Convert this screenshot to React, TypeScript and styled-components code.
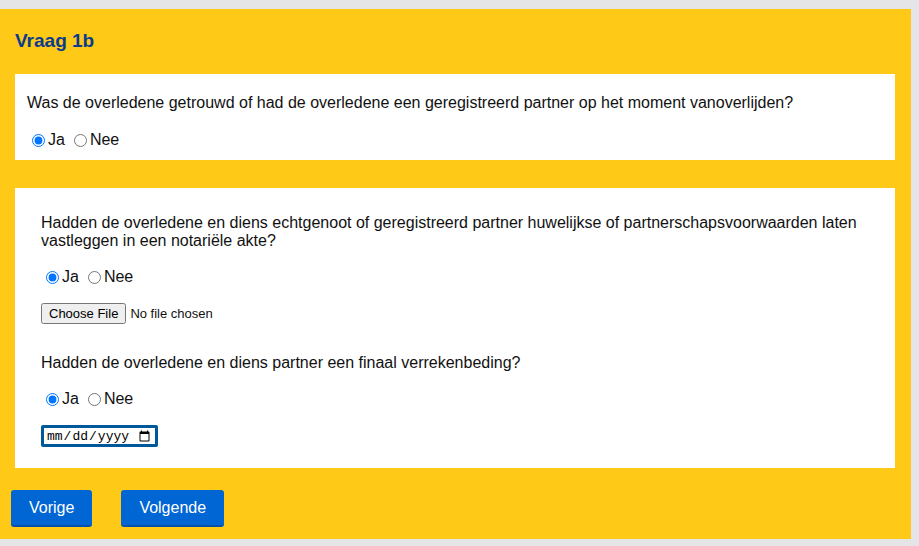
import { FunctionComponent } from "react";
import styled, { createGlobalStyle } from "styled-components";

const GlobalStyle = createGlobalStyle`
  html, body {
    margin: 0;
    padding: 0;
    background: #e5e5e7;
  }
  body {
    font-family: "Liberation Sans", Arial, sans-serif;
    color: #111;
  }
`

const Page = styled.div`
  padding-top: 9px;
  width: 919px;
  height: 546px;
  box-sizing: border-box;
`
const Panel = styled.div`
  width: 911px;
  box-sizing: border-box;
  background: #fec917;
  padding: 20px 16px 12px 11px;
`
const Title = styled.h2`
  margin: 0 0 22px 4px;
  font-size: 19px;
  line-height: 23px;
  font-weight: bold;
  color: #0b3b8c;
`
const Card = styled.div<{ $pad: string }>`
  margin-left: 4px;
  background: #fff;
  padding: ${props => props.$pad};
  display: flex;
  flex-direction: column;
`
const Question = styled.p<{ $gap: number }>`
  margin: 0 0 ${props => props.$gap}px 0;
  font-size: 16px;
  line-height: 18px;
`
const Row = styled.div<{ $gap: number; $h: number }>`
  display: flex;
  align-items: center;
  height: ${props => props.$h}px;
  margin-bottom: ${props => props.$gap}px;
  font-size: 16px;
`
const RadioLabel = styled.label`
  display: flex;
  align-items: center;
  margin-right: 4px;
  input {
    width: 13px;
    height: 13px;
    margin: 1px 3px 0 5px;
  }
`
const FileInput = styled.input`
  font: 13px "Liberation Sans", Arial, sans-serif;
`
const DateInput = styled.input`
  width: 117px;
  height: 22px;
  box-sizing: border-box;
  border: 3px solid #00589c;
  border-radius: 2px;
  padding: 0 2px;
  font: 13px "Liberation Mono", monospace;
  outline: none;
`
const Second = styled.div`
  margin-top: 28px;
`
const ButtonRow = styled.div`
  display: flex;
  gap: 29px;
  margin-top: 22px;
`
const NavButton = styled.button`
  height: 37px;
  padding: 0 18px;
  border: none;
  border-bottom: 2px solid #0253a8;
  border-radius: 3px;
  background: #0066d4;
  color: #fff;
  font: 16px "Liberation Sans", Arial, sans-serif;
  cursor: pointer;
`

const YesNo: FunctionComponent<{ name: string; gap: number }> = ({ name, gap }) => (
  <Row $gap={gap} $h={18}>
    <RadioLabel>
      <input type="radio" name={name} defaultChecked />Ja
    </RadioLabel>
    <RadioLabel>
      <input type="radio" name={name} />Nee
    </RadioLabel>
  </Row>
)

const App: FunctionComponent = () => {
  return (
    <Page>
      <GlobalStyle />
      <Panel>
        <Title>Vraag 1b</Title>
        <Card $pad="20px 12px 11px 12px">
          <Question $gap={19}>
            Was de overledene getrouwd of had de overledene een geregistreerd partner op het moment vanoverlijden?
          </Question>
          <YesNo name="getrouwd" gap={0} />
        </Card>
        <Second>
          <Card $pad="26px 26px 21px 26px">
            <Question $gap={18}>
              Hadden de overledene en diens echtgenoot of geregistreerd partner huwelijkse of partnerschapsvoorwaarden laten vastleggen in een notariële akte?
            </Question>
            <YesNo name="akte" gap={17} />
            <Row $gap={30} $h={21}>
              <FileInput type="file" />
            </Row>
            <Question $gap={18}>Hadden de overledene en diens partner een finaal verrekenbeding?</Question>
            <YesNo name="beding" gap={17} />
            <Row $gap={0} $h={22}>
              <DateInput type="date" />
            </Row>
          </Card>
        </Second>
        <ButtonRow>
          <NavButton>Vorige</NavButton>
          <NavButton>Volgende</NavButton>
        </ButtonRow>
      </Panel>
    </Page>
  )
}

export default App;
